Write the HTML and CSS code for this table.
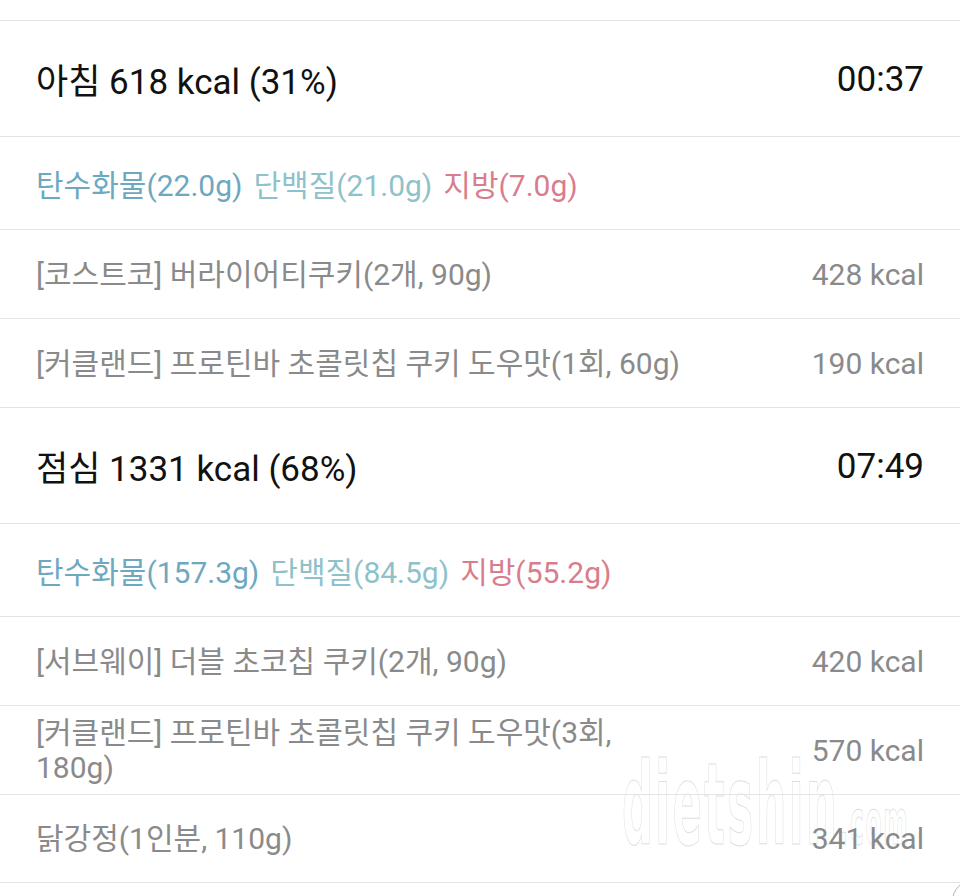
FILE: index.html
```html
<!DOCTYPE html>
<html lang="ko">
<head>
<meta charset="utf-8">
<link rel="stylesheet" href="styles.css">
</head>
<body>
<div class="screen">
  <div class="list">
    <div class="row header">
      <span class="meal">아침 618 kcal (31%)</span>
      <span class="time">00:37</span>
    </div>
    <div class="row macro">
      <span class="carb">탄수화물(22.0g)</span>
      <span class="prot">단백질(21.0g)</span>
      <span class="fat">지방(7.0g)</span>
    </div>
    <div class="row item">
      <span class="name">[코스트코] 버라이어티쿠키(2개, 90g)</span>
      <span class="kcal">428 kcal</span>
    </div>
    <div class="row item">
      <span class="name">[커클랜드] 프로틴바 초콜릿칩 쿠키 도우맛(1회, 60g)</span>
      <span class="kcal">190 kcal</span>
    </div>
    <div class="row header">
      <span class="meal">점심 1331 kcal (68%)</span>
      <span class="time">07:49</span>
    </div>
    <div class="row macro">
      <span class="carb">탄수화물(157.3g)</span>
      <span class="prot">단백질(84.5g)</span>
      <span class="fat">지방(55.2g)</span>
    </div>
    <div class="row item">
      <span class="name">[서브웨이] 더블 초코칩 쿠키(2개, 90g)</span>
      <span class="kcal">420 kcal</span>
    </div>
    <div class="row item">
      <span class="name">[커클랜드] 프로틴바 초콜릿칩 쿠키 도우맛(3회, 180g)</span>
      <span class="kcal">570 kcal</span>
    </div>
    <div class="row item">
      <span class="name">닭강정(1인분, 110g)</span>
      <span class="kcal">341 kcal</span>
    </div>
  </div>
  <div class="watermark">dietshin<span class="dotcom">.com</span></div>
  <div class="corner"></div>
</div>
</body>
</html>
```

FILE: styles.css
```css
html {
  margin: 0;
  padding: 0;
  background: #ffffff;
}

body {
  margin: 0;
  padding: 0;
  font-family: Roboto, "Noto Sans CJK KR", sans-serif;
  width: 960px;
  height: 896px;
  overflow: hidden;
}

.screen {
  position: relative;
  width: 960px;
  height: 896px;
  overflow: hidden;
}

.list {
  padding-top: 20px;
}

.row {
  display: flex;
  align-items: center;
  justify-content: space-between;
  padding: 0 36px;
  border-top: 1px solid #e4e4e4;
  box-sizing: border-box;
}

.row:last-child {
  border-bottom: 1px solid #e4e4e4;
}

.header {
  height: 116px;
  font-size: 35px;
  color: #111111;
}

.header .time {
  padding-top: 2px;
}

.macro {
  height: 93px;
  justify-content: flex-start;
  gap: 11px;
  font-size: 30px;
}

.carb { color: #6ea8c0; }
.prot { color: #8ec2cb; }
.fat { color: #d97d8c; }

.item {
  height: 89px;
  font-size: 30px;
  color: #8a8a8a;
}

.item .name {
  max-width: 648px;
  line-height: 35px;
}

.item .kcal {
  white-space: nowrap;
}

.watermark {
  position: absolute;
  z-index: -1;
  left: 622px;
  top: 748px;
  font-family: "DejaVu Sans Condensed", "DejaVu Sans", sans-serif;
  font-weight: bold;
  font-size: 114px;
  line-height: 1;
  color: rgba(255, 255, 255, 0.6);
  -webkit-text-stroke: 1px rgba(200, 200, 200, 0.6);
  transform: scaleX(0.42);
  transform-origin: left top;
  letter-spacing: 6px;
  white-space: nowrap;
}

.watermark .dotcom {
  font-size: 62px;
  letter-spacing: 4px;
}

.corner {
  position: absolute;
  left: 952px;
  top: 880px;
  width: 40px;
  height: 40px;
  border: 1.5px solid #b5b5b5;
  border-radius: 50%;
}
```
